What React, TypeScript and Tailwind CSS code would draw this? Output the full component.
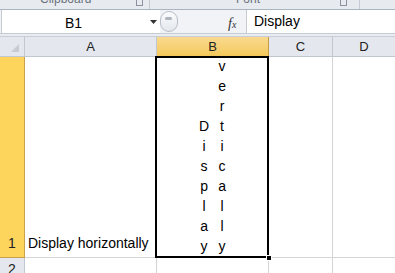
import React from "react";

const vert = "vertically".split("");
const disp = "Display".split("");

export default function App() {
  return (
    <div className="w-[395px] h-[273px] overflow-hidden bg-white font-['Liberation_Sans',sans-serif] text-[#000] relative">
      {/* ribbon group label strip */}
      <div className="h-[10px] bg-[#e7ebf0] border-b border-[#aab4c1] flex overflow-hidden relative">
        <div className="w-[150px] relative border-r border-[#c3cad3]">
          <div className="absolute left-[40px] top-[-8px] text-[12px] text-[#6b737c] leading-[14px]">Clipboard</div>
          <div className="absolute left-[136px] top-[0px] w-[7px] h-[6px] border border-[#8a939d] border-t-0"></div>
        </div>
        <div className="w-[210px] relative border-r border-[#c3cad3]">
          <div className="absolute left-[86px] top-[-8px] text-[12px] text-[#6b737c] leading-[14px]">Font</div>
          <div className="absolute left-[190px] top-[0px] w-[7px] h-[6px] border border-[#8a939d] border-t-0"></div>
        </div>
        <div className="flex-1"></div>
      </div>

      {/* formula bar */}
      <div className="h-[24px] bg-[#f1f3f6] flex items-stretch border-b border-[#c6ccd4]">
        <div className="w-[159px] bg-white border-l border-[#c6ccd4] ml-[1px] flex items-center relative">
          <span className="absolute left-[63px] text-[14px] top-[3px]">B1</span>
          <svg className="absolute left-[148px] top-[10px]" width="7" height="4" viewBox="0 0 7 4">
            <path d="M0 0 L7 0 L3.5 4 Z" fill="#333" />
          </svg>
        </div>
        <div className="w-[86px] relative">
          <div className="absolute left-[0px] top-[1px] w-[18px] h-[21px] rounded-full border border-[#b8bfc8] bg-gradient-to-b from-[#fbfcfd] to-[#e3e7ec]"></div>
          <div className="absolute left-[5px] top-[7px] w-[7px] h-[3px] bg-[#aeb5be] rounded-sm"></div>
          <span className="absolute left-[68px] top-[3px] text-[14px] italic font-['Liberation_Serif',serif] text-[#333]">
            f<span className="text-[10px]">x</span>
          </span>
        </div>
        <div className="flex-1 bg-white border-l border-[#c6ccd4] flex items-center pl-[7px] text-[14px]">Display</div>
      </div>

      {/* gap */}
      <div className="h-[3px] bg-[#e9edf2] border-b border-[#c9ced6]"></div>

      {/* grid */}
      <div className="grid grid-cols-[25px_132px_112px_64px_1fr] grid-rows-[20px_201px_30px] text-[13px]">
        {/* header row */}
        <div className="bg-[#e4e8ee] border-r border-b border-[#c0c7d0] relative">
          <svg className="absolute right-[5px] bottom-[4px]" width="8" height="8" viewBox="0 0 8 8">
            <path d="M8 0 L8 8 L0 8 Z" fill="#c8ccd2" />
          </svg>
        </div>
        <div className="bg-[#e4e8ee] border-r border-b border-[#c0c7d0] flex items-center justify-center text-[#222]">A</div>
        <div className="bg-gradient-to-b from-[#f9d98f] to-[#f4c95a] border-r border-b border-[#c29b45] flex items-center justify-center text-[#222]">B</div>
        <div className="bg-[#e4e8ee] border-r border-b border-[#c0c7d0] flex items-center justify-center text-[#222]">C</div>
        <div className="bg-[#e4e8ee] border-b border-[#c0c7d0] flex items-center justify-center text-[#222]">D</div>

        {/* row 1 */}
        <div className="bg-[#fdd45c] border-r border-b border-[#c9a24b] flex items-end justify-center pb-[3px] text-[14px] text-[#222]">1</div>
        <div className="border-r border-b border-[#d4d4d4] flex items-end pl-[3px] pb-[3px] text-[14px] whitespace-nowrap">
          Display horizontally
        </div>
        <div className="border-r border-b border-[#d4d4d4] relative flex items-end justify-center gap-[9px] pb-[1px] text-[14px]">
          <div className="flex flex-col items-center">
            {disp.map((c, i) => (
              <span key={i} className="h-[20px] leading-[20px]">{c}</span>
            ))}
          </div>
          <div className="flex flex-col items-center">
            {vert.map((c, i) => (
              <span key={i} className="h-[20px] leading-[20px]">{c}</span>
            ))}
          </div>
          <div className="absolute left-[-2px] top-[-1px] right-[-1px] bottom-[-1px] border-2 border-black pointer-events-none"></div>
          <div className="absolute right-[-4px] bottom-[-4px] w-[6px] h-[6px] bg-black border border-white"></div>
        </div>
        <div className="border-r border-b border-[#d4d4d4]"></div>
        <div className="border-b border-[#d4d4d4]"></div>

        {/* row 2 */}
        <div className="bg-[#e4e8ee] border-r border-[#c0c7d0] flex items-start justify-center pt-[1px] text-[14px] text-[#222]">2</div>
        <div className="border-r border-[#d4d4d4]"></div>
        <div className="border-r border-[#d4d4d4]"></div>
        <div className="border-r border-[#d4d4d4]"></div>
        <div></div>
      </div>
    </div>
  );
}
